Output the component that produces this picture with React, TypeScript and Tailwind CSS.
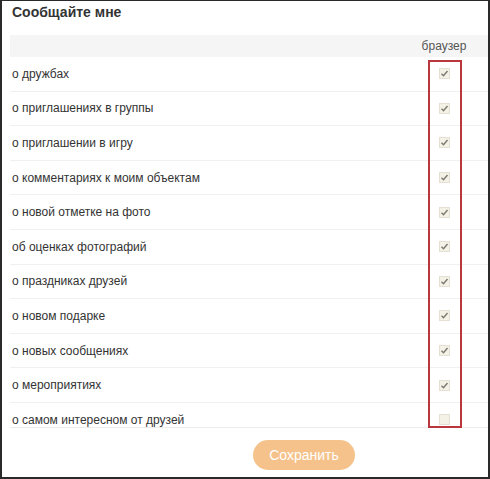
import React from "react";

const items: { label: string; checked: boolean }[] = [
  { label: "о дружбах", checked: true },
  { label: "о приглашениях в группы", checked: true },
  { label: "о приглашении в игру", checked: true },
  { label: "о комментариях к моим объектам", checked: true },
  { label: "о новой отметке на фото", checked: true },
  { label: "об оценках фотографий", checked: true },
  { label: "о праздниках друзей", checked: true },
  { label: "о новом подарке", checked: true },
  { label: "о новых сообщениях", checked: true },
  { label: "о мероприятиях", checked: true },
  { label: "о самом интересном от друзей", checked: false },
];

function Box({ checked }: { checked: boolean }) {
  return (
    <div className="w-[11px] h-[11px] border border-[#e4e0d4] bg-[#f4f1e6] flex items-center justify-center">
      {checked && (
        <svg width="9" height="9" viewBox="0 0 9 9">
          <polyline points="1.5,4.8 3.5,6.8 7.5,2" fill="none" stroke="#7a7a70" strokeWidth="1.4" />
        </svg>
      )}
    </div>
  );
}

export default function App() {
  return (
    <div className="relative w-[490px] h-[479px] bg-white border-t border-l-2 border-r-2 border-b-2 border-[#2a2a2a] overflow-hidden font-['Liberation_Sans',Arial,sans-serif]">
      <div className="h-[34px] pl-[10px] pt-[2px] text-[14px] leading-[18px] font-bold text-[#333]">
        Сообщайте мне
      </div>
      <div className="ml-[8px] flex flex-col">
        <div className="h-[22px] bg-[#f5f5f5] flex items-center">
          <div className="flex-1" />
          <div className="w-[88px] text-center text-[12px] text-[#555]">браузер</div>
        </div>
        <div className="h-[371px] overflow-hidden border-b border-[#ececec]">
          {items.map((it) => (
            <div key={it.label} className="h-[34.6px] flex items-center border-b border-[#f0f0f0]">
              <div className="flex-1 pl-[2px] text-[12px] text-[#333]">{it.label}</div>
              <div className="w-[88px] flex justify-center">
                <Box checked={it.checked} />
              </div>
            </div>
          ))}
        </div>
        <div className="pt-[12px]">
          <button className="ml-[243px] w-[102px] h-[30px] rounded-full bg-[#f5c28b] text-white text-[14px]">
            Сохранить
          </button>
        </div>
      </div>
      <div className="absolute left-[426px] top-[59px] w-[34px] h-[368px] border-2 border-[#b8363c]" />
    </div>
  );
}
